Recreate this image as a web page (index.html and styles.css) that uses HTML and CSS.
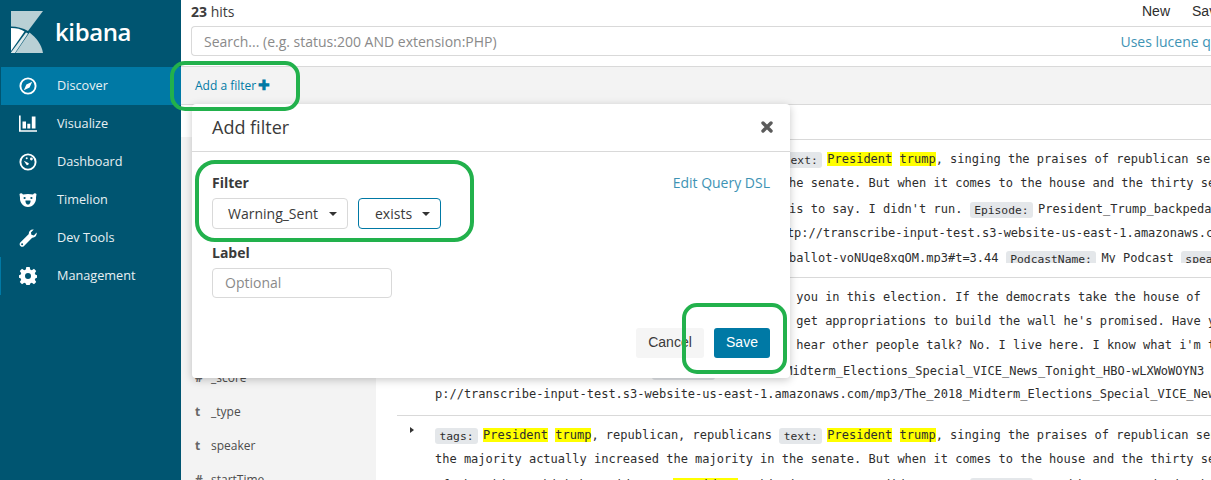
FILE: index.html
```html
<!DOCTYPE html>
<html lang="en">
<head>
<meta charset="utf-8">
<title>Kibana Discover</title>
<link rel="stylesheet" href="styles.css">
</head>
<body>
<div class="app">
  <nav class="nav">
    <div class="brand">
      <svg class="logo" viewBox="0 0 32 42" width="32" height="42">
        <path d="M0 0H32L17 20C12 17 6 15.5 0 15.5Z" fill="#b9d0d5"/>
        <path d="M18.5 21.5C25 26.5 30.5 33 32 42H4.5Z" fill="#b9d0d5"/>
        <path d="M0 17C5.5 17 10 18 13.5 20.5L0 40Z" fill="#fff"/>
        <path d="M15 21.5L17 22.6L4 42H0V41.5Z" fill="#dce8ea"/>
      </svg>
      <span class="brand-name">kibana</span>
    </div>
    <a class="nav-item active">
      <svg class="nav-icon" viewBox="0 0 18 18"><circle cx="9" cy="9" r="7.6" fill="none" stroke="#fff" stroke-width="1.9"/><path d="M13.2 4.8L10.6 10.6L4.8 13.2L7.4 7.4Z" fill="#fff"/></svg>
      <span>Discover</span>
    </a>
    <a class="nav-item">
      <svg class="nav-icon" viewBox="0 0 18 18"><path d="M0.8 0.5V16H18" fill="none" stroke="#fff" stroke-width="1.7"/><path d="M3.5 6.5H7V13.5H3.5ZM8.3 8.8H11.3V13.5H8.3ZM12.8 1.5H16.5V13.5H12.8Z" fill="#fff"/></svg>
      <span>Visualize</span>
    </a>
    <a class="nav-item">
      <svg class="nav-icon" viewBox="0 0 18 18"><circle cx="9" cy="9" r="7.6" fill="none" stroke="#fff" stroke-width="1.9"/><circle cx="12.4" cy="6" r="1.4" fill="#fff"/><circle cx="7.7" cy="5.2" r="1" fill="#fff"/><path d="M4.8 7.8L9.8 10.2A1.9 1.9 0 0 1 7.8 12.2Z" fill="#fff"/></svg>
      <span>Dashboard</span>
    </a>
    <a class="nav-item">
      <svg class="nav-icon" viewBox="0 0 18 18"><path d="M0.5 3C2 1.8 3 2.5 4 3.5C7 2.8 11 2.8 14 3.5C15 2.5 16 1.8 17.5 3L17 6.5C17.5 11 14 16 9 16C4 16 0.5 11 1 6.5Z" fill="#fff"/><circle cx="5.6" cy="7" r="1.1" fill="#005571"/><circle cx="12.4" cy="7" r="1.1" fill="#005571"/><path d="M6.5 9.5H11.5C11.8 11 10.8 13.6 9 13.6C7.2 13.6 6.2 11 6.5 9.5Z" fill="#005571"/></svg>
      <span>Timelion</span>
    </a>
    <a class="nav-item">
      <svg class="nav-icon" viewBox="0 0 18 18"><path d="M17.6 3.6C18.2 6.4 16 9 13.2 8.7L4.8 17.2C3.7 18.2 2.5 18 1.4 17C0.4 15.9 0.4 14.7 1.3 13.6L9.8 5C9.4 2.2 12 0 14.8 0.6L11.9 3.4L12.4 5.8L14.9 6.4Z" fill="#fff"/><circle cx="3.1" cy="15.2" r="1" fill="#005571"/></svg>
      <span>Dev Tools</span>
    </a>
    <a class="nav-item marked">
      <svg class="nav-icon" viewBox="0 0 18 18"><path d="M7.3 0H10.7L11.2 2.5L12.8 3.2L15 1.8L17.2 4L15.8 6.2L16.5 7.8L18 8.2V10.8L16.5 11.2L15.8 12.8L17.2 15L15 17.2L12.8 15.8L11.2 16.5L10.7 18H7.3L6.8 16.5L5.2 15.8L3 17.2L0.8 15L2.2 12.8L1.5 11.2L0 10.8V8.2L1.5 7.8L2.2 6.2L0.8 4L3 1.8L5.2 3.2L6.8 2.5ZM9 6A3 3 0 1 0 9 12A3 3 0 1 0 9 6Z" fill="#fff" fill-rule="evenodd"/></svg>
      <span>Management</span>
    </a>
  </nav>

  <main class="main">
    <header class="topbar">
      <span class="hits"><b>23</b> hits</span>
      <div class="top-links"><a>New</a><a>Save</a><a>Open</a></div>
    </header>
    <div class="searchbar">
      <span class="search-hint">Search... (e.g. status:200 AND extension:PHP)</span>
      <a class="lucene">Uses lucene query syntax</a>
    </div>
    <div class="filterbar"><a class="add-filter">Add a filter <b class="plus">✚</b></a></div>
    <div class="band"></div>
    <div class="body">
      <aside class="fields">
        <div class="field"><i>t</i><span>_id</span></div>
        <div class="field"><i>t</i><span>_index</span></div>
        <div class="field"><i>t</i><span>Episode</span></div>
        <div class="field"><i>t</i><span>PodcastName</span></div>
        <div class="field"><i>t</i><span>_source</span></div>
        <div class="field"><i>t</i><span>tags</span></div>
        <div class="field"><i>#</i><span>_score</span></div>
        <div class="field"><i>t</i><span>_type</span></div>
        <div class="field"><i>t</i><span>speaker</span></div>
        <div class="field"><i>#</i><span>startTime</span></div>
      </aside>
      <section class="results">
        <article class="hit">
          <div class="line"><span class="tag">tags:</span><mark>President</mark> <mark>trump</mark>, republican, republicans <span class="tag">text:</span><mark>President</mark> <mark>trump</mark>, singing the praises of republican senators</div>
          <div class="line">the majority actually increased the majority in the senate. But when it comes to the house and the thirty seats</div>
          <div class="line gap-two">of the things which he said as a <mark>President</mark>. This is to say. I didn't run. <span class="tag">Episode:</span>President_Trump_backpedals_on_the_ballot</div>
          <div class="line">President_Trump_backpedals_on_the_ballot <span class="tag">url:</span>http://transcribe-input-test.s3-website-us-east-1.amazonaws.com/mp3</div>
          <div class="line gap-one clipped">azonaws.com/mp3/President_Trump_backpedal_on_the_ballot-voNUqe8xqOM.mp3#t=3.44 <span class="tag">PodcastName:</span>My Podcast <span class="tag">speaker:</span>spk_0</div>
        </article>
        <article class="hit">
          <div class="line">The president says that he is really depending on you in this election. If the democrats take the house of</div>
          <div class="line">representatives in november, then mr. trump can't get appropriations to build the wall he's promised. Have you</div>
          <div class="line">ou been to the rallies? Did you come here just to hear other people talk? No. I live here. I know what i'm talking</div>
          <div class="line gap-two">what's really going on there. <span class="tag">Episode:</span>The_2018_Midterm_Elections_Special_VICE_News_Tonight_HBO-wLXWoWOYN3</div>
          <div class="line gap-less">p://transcribe-input-test.s3-website-us-east-1.amazonaws.com/mp3/The_2018_Midterm_Elections_Special_VICE_News</div>
        </article>
        <article class="hit">
          <span class="toggle"></span>
          <div class="line"><span class="tag">tags:</span><mark>President</mark> <mark>trump</mark>, republican, republicans <span class="tag">text:</span><mark>President</mark> <mark>trump</mark>, singing the praises of republican senators</div>
          <div class="line">the majority actually increased the majority in the senate. But when it comes to the house and the thirty seats</div>
          <div class="line gap-two">of the things which he said as a <mark>President</mark>. This is to say. I didn't run. <span class="tag">Episode:</span>President_Trump_backpedals_on_the_ballot</div>
        </article>
      </section>
    </div>
  </main>
</div>

<div class="modal">
  <div class="modal-head">
    <h2>Add filter</h2>
    <svg class="close" viewBox="0 0 14 14" width="14" height="14"><path d="M3 3L11 11M11 3L3 11" stroke="#5b5b5b" stroke-width="3.4" stroke-linecap="round"/></svg>
  </div>
  <div class="modal-body">
    <div class="label-row"><label>Filter</label><a class="dsl">Edit Query DSL</a></div>
    <div class="select-row">
      <div class="select wide">Warning_Sent<span class="caret"></span></div>
      <div class="select focused">exists<span class="caret"></span></div>
    </div>
    <label class="label-second">Label</label>
    <div class="text-input">Optional</div>
    <div class="modal-actions">
      <button class="btn">Cancel</button>
      <button class="btn primary">Save</button>
    </div>
  </div>
</div>

<div class="mark-box box-add"></div>
<div class="mark-box box-filter"></div>
<div class="mark-box box-save"></div>
</body>
</html>
```
FILE: styles.css
```css
* { box-sizing: border-box; }
html, body { margin: 0; height: 480px; overflow: hidden; background: #fff; }
body { font-family: "Open Sans", sans-serif; font-size: 14px; color: #2d2d2d; position: relative; }

.app { display: flex; width: 1211px; height: 480px; overflow: hidden; }

.nav { width: 181px; flex: none; background: #005571; color: #fff; }
.brand { height: 67px; display: flex; align-items: flex-start; padding: 11px 0 0 11px; }
.logo { flex: none; }
.brand-name { margin: 5px 0 0 12px; font-size: 24px; line-height: 32px; font-weight: 600; letter-spacing: -0.4px; color: #fff; }
.nav-item { display: flex; align-items: center; height: 38px; padding-left: 19px; font-size: 12.7px; color: #e8f0f3; }
.nav-item span { padding-bottom: 2px; }
.nav-item.active { background: #0079a5; margin-left: 1px; padding-left: 18px; }
.nav-item.marked { box-shadow: inset 1px 0 0 #0079a5; }
.nav-icon { width: 18px; height: 18px; margin-right: 20px; flex: none; }

.main { flex: 1; min-width: 0; display: flex; flex-direction: column; }
.topbar { height: 26px; display: flex; align-items: flex-start; justify-content: space-between; padding-left: 10px; line-height: 23px; }
.hits { font-size: 14px; color: #3c3c3c; }
.top-links { display: flex; gap: 22px; font-family: "Liberation Sans", sans-serif; font-size: 14px; margin-right: -80px; flex: none; white-space: nowrap; color: #2d2d2d; width: 149px; }
.searchbar { height: 30px; margin-left: 10px; display: flex; align-items: center; justify-content: space-between; border: 1px solid #d9d9d9; border-right: 0; border-radius: 4px 0 0 4px; padding-left: 12px; overflow: hidden; white-space: nowrap; }
.search-hint { color: #8a8a8a; }
.lucene { color: #3e93b4; margin-right: -75px; flex: none; }
.filterbar { height: 39px; margin-top: 10px; background: #f3f3f3; border-top: 1px solid #d9d9d9; border-bottom: 1px solid #d9d9d9; display: flex; align-items: center; padding-left: 14px; }
.add-filter { color: #0079a5; font-size: 12px; white-space: nowrap; }
.plus { font-size: 14px; line-height: 12px; font-weight: 700; margin-left: -1px; }
.band { height: 32px; }

.body { flex: 1; min-height: 0; display: flex; }
.fields { width: 195px; flex: none; background: #f3f3f3; padding-top: 19px; overflow: hidden; }
.field { height: 34px; display: flex; align-items: center; padding-left: 14px; font-size: 12px; color: #4c4c4c; white-space: nowrap; }
.field i { width: 16px; font-style: normal; font-weight: 700; color: #666; }

.results { flex: 1; min-width: 0; padding-left: 21px; overflow: hidden; }
.hit { position: relative; height: 138px; margin-top: 2px; margin-bottom: -2px; border-top: 1px solid #d9d9d9; padding: 7px 0 0 38px; overflow: hidden; }
.hit .line { height: 24px; line-height: 24px; }
.hit .line.gap-two { margin-top: 2px; }
.hit .line.gap-one { margin-top: 1px; }
.hit .line.gap-less { margin-top: -1px; }
.hit .line.clipped { height: 17px; overflow: hidden; }
.line { font-family: "DejaVu Sans Mono", monospace; font-size: 12px; white-space: nowrap; color: #2d2d2d; }
.tag { background: #e4e7ea; border-radius: 3px; padding: 1.5px 4.5px; margin-right: 5px; font-size: 11.3px; }
mark { background: #ffff00; color: #2d2d2d; }
.toggle { position: absolute; left: 13px; top: 11px; border-style: solid; border-width: 3px 0 3px 4px; border-color: transparent transparent transparent #333; }

.modal { position: absolute; left: 192px; top: 104px; width: 598px; height: 274px; background: #fff; border-radius: 4px; box-shadow: 0 2px 8px rgba(0,0,0,.22); }
.modal-head { height: 48px; padding: 0 16px 2px 20px; display: flex; align-items: center; justify-content: space-between; border-bottom: 1px solid #d9d9d9; }
.modal-head h2 { margin: 0; font-size: 18px; font-weight: 400; color: #3a3a3a; }
.close { flex: none; }
.modal-body { padding: 20px 20px 0; }
.label-row { display: flex; justify-content: space-between; align-items: center; height: 20px; }
.label-row label, .label-second { font-weight: 700; font-size: 14px; color: #3a3a3a; }
.dsl { color: #3e93b4; }
.select-row { display: flex; gap: 10px; margin-top: 6px; }
.select { height: 31px; display: flex; align-items: center; justify-content: space-between; padding: 0 10px 0 15px; border: 1px solid #d9d9d9; border-radius: 4px; width: 83px; color: #3a3a3a; }
.select.wide { width: 136px; }
.select.focused { border-color: #0079a5; padding-left: 16px; }
.caret { border-style: solid; border-width: 4px 4px 0; border-color: #333 transparent transparent; margin-left: 8px; flex: none; }
.label-second { display: block; margin-top: 14px; line-height: 20px; }
.text-input { width: 180px; height: 30px; margin-top: 5px; padding-left: 12px; line-height: 28px; border: 1px solid #d9d9d9; border-radius: 4px; color: #8a8a8a; }
.modal-actions { display: flex; justify-content: flex-end; gap: 10px; margin-top: 30px; }
.btn { height: 30px; padding: 0 0 2px; border: 0; border-radius: 3px; background: #f5f5f5; color: #3a3a3a; font-family: "Liberation Sans", sans-serif; font-size: 14px; width: 68px; }
.btn.primary { background: #0079a5; color: #fff; width: 56px; }

.mark-box { position: absolute; border: 4px solid #22b14c; border-radius: 15px; pointer-events: none; }
.box-add { left: 170px; top: 61px; width: 130px; height: 50px; }
.box-filter { left: 195px; top: 160px; width: 279px; height: 82px; border-radius: 20px; }
.box-save { left: 682px; top: 303px; width: 105px; height: 71px; }
```
